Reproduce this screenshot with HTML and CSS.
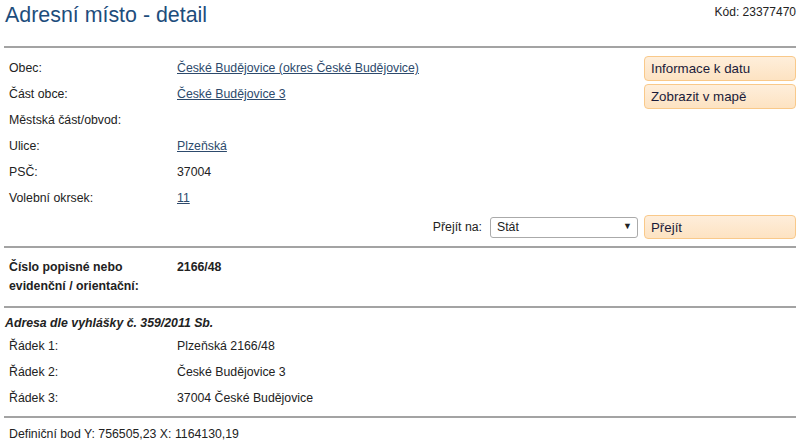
FILE: index.html
```html
<!DOCTYPE html>
<html lang="cs">
<head>
<meta charset="utf-8">
<title>Adresní místo - detail</title>
<link rel="stylesheet" href="styles.css">
</head>
<body>
<div class="page">
  <header class="header">
    <h1 class="title">Adresní místo - detail</h1>
    <div class="code">Kód: 23377470</div>
  </header>

  <section class="upper">
    <div class="upper-main">
      <div class="rows">
        <div class="label">Obec:</div>
        <div class="value"><a href="#">České Budějovice (okres České Budějovice)</a></div>
        <div class="label">Část obce:</div>
        <div class="value"><a href="#">České Budějovice 3</a></div>
        <div class="label">Městská část/obvod:</div>
        <div class="value"></div>
        <div class="label">Ulice:</div>
        <div class="value"><a href="#">Plzeňská</a></div>
        <div class="label">PSČ:</div>
        <div class="value">37004</div>
        <div class="label">Volební okrsek:</div>
        <div class="value"><a href="#">11</a></div>
      </div>
      <div class="actions">
        <button class="btn">Informace k datu</button>
        <button class="btn">Zobrazit v mapě</button>
      </div>
    </div>
    <div class="goto">
      <span class="goto-label">Přejít na:</span>
      <div class="select-wrap">
        <select class="select"><option>Stát</option></select>
        <span class="select-arrow">▼</span>
      </div>
      <button class="btn btn-go">Přejít</button>
    </div>
  </section>

  <section class="number">
    <div class="rows rows-bold">
      <div class="label">Číslo popisné nebo<br>evidenční / orientační:</div>
      <div class="value">2166/48</div>
    </div>
  </section>

  <section class="address">
    <div class="address-title">Adresa dle vyhlášky č. 359/2011 Sb.</div>
    <div class="rows">
      <div class="label">Řádek 1:</div>
      <div class="value">Plzeňská 2166/48</div>
      <div class="label">Řádek 2:</div>
      <div class="value">České Budějovice 3</div>
      <div class="label">Řádek 3:</div>
      <div class="value">37004 České Budějovice</div>
    </div>
  </section>

  <section class="point">Definiční bod Y: 756505,23 X: 1164130,19</section>
</div>
</body>
</html>
```

FILE: styles.css
```css
* { box-sizing: border-box; }
html, body {
  margin: 0;
  padding: 0;
  background: #fff;
}
body {
  font-family: "Liberation Sans", Arial, sans-serif;
  font-size: 12.3px;
  color: #222;
}
.page {
  padding: 0 4px;
}
.header {
  display: flex;
  justify-content: space-between;
  align-items: flex-start;
  height: 48px;
  border-bottom: 2px solid #a3a3a3;
}
.title {
  margin: 0;
  padding-top: 2px;
  padding-left: 1px;
  font-size: 21.4px;
  line-height: 26px;
  font-weight: normal;
  color: #1d4d7c;
}
.code {
  padding-top: 5px;
  font-size: 12px;
  line-height: 14px;
  color: #222;
}
.upper {
  padding-top: 7px;
  padding-bottom: 7px;
  border-bottom: 2px solid #a3a3a3;
}
.upper-main {
  display: flex;
  align-items: flex-start;
}
.rows {
  flex: 1;
  display: grid;
  grid-template-columns: 168px 1fr;
  grid-auto-rows: 26px;
  align-items: center;
  padding-left: 5px;
}
.rows a {
  color: #2d4a6c;
  text-decoration: underline;
}
.actions {
  width: 152px;
  display: flex;
  flex-direction: column;
  gap: 3px;
  padding-top: 1px;
}
.btn {
  font-family: "Liberation Sans", Arial, sans-serif;
  font-size: 13.3px;
  color: #1b1b3a;
  text-align: left;
  height: 25px;
  padding: 0 6px;
  border: 1px solid #f9c98a;
  border-radius: 4px;
  background: linear-gradient(#feeedb, #fde3c2);
}
.goto {
  display: flex;
  justify-content: flex-end;
  align-items: center;
  margin-top: 4px;
}
.goto-label {
  margin-right: 8px;
}
.select-wrap {
  position: relative;
  width: 148px;
  height: 21px;
  margin-right: 6px;
}
.select {
  appearance: none;
  -webkit-appearance: none;
  width: 100%;
  height: 100%;
  font-family: "Liberation Sans", Arial, sans-serif;
  font-size: 12.3px;
  color: #222;
  padding: 0 0 0 6px;
  border: 1px solid #aaa;
  border-radius: 3px;
  background: #fff;
}
.select-arrow {
  position: absolute;
  right: 6px;
  top: 4px;
  font-size: 9px;
  color: #222;
  pointer-events: none;
}
.btn-go {
  width: 152px;
  height: 24px;
}
.number {
  padding: 10px 0;
  border-bottom: 2px solid #a3a3a3;
}
.rows-bold {
  grid-auto-rows: auto;
  align-items: start;
  font-weight: bold;
  line-height: 19px;
}
.address {
  padding-top: 5px;
  padding-bottom: 5px;
  border-bottom: 2px solid #a3a3a3;
}
.address-title {
  padding-left: 1px;
  line-height: 20px;
  font-weight: bold;
  font-style: italic;
}
.point {
  padding-top: 3px;
  padding-left: 5px;
  line-height: 26px;
}
```
